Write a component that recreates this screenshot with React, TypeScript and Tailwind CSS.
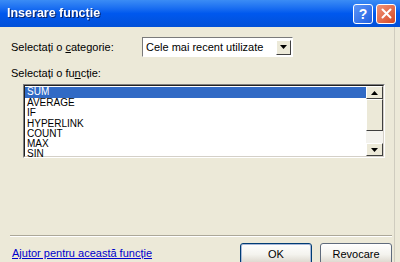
import React from 'react';

const functions = ['SUM', 'AVERAGE', 'IF', 'HYPERLINK', 'COUNT', 'MAX', 'SIN'];

const Arrow = ({ down }: { down?: boolean }) => (
  <svg width="7" height="4" viewBox="0 0 7 4">
    {down ? <polygon points="0,0 7,0 3.5,4" fill="#000" /> : <polygon points="0,4 7,4 3.5,0" fill="#000" />}
  </svg>
);

const XpButton = ({ label, isDefault }: { label: string; isDefault?: boolean }) => (
  <button
    className={`h-[23px] w-[72px] rounded-[3px] border bg-gradient-to-b from-[#ffffff] via-[#f4f3ee] to-[#d6d0c5] text-[11px] text-black ${
      isDefault ? 'border-[#003c74] shadow-[inset_0_0_0_1px_#a8b8d8]' : 'border-[#5f6b7c]'
    }`}
  >
    {label}
  </button>
);

export default function App() {
  return (
    <div className="w-[400px] h-[262px] overflow-hidden bg-[#ece9d8] flex flex-col font-['Liberation_Sans',sans-serif] text-[11px] text-black">
      {/* title bar */}
      <div className="h-[27px] shrink-0 flex items-center justify-between pl-[7px] pr-[4px] bg-gradient-to-b from-[#3b8cf5] via-[#0058ee] to-[#0150d8]">
        <span className="text-white font-bold text-[12.5px] drop-shadow-[1px_1px_0_#0a246a]">Inserare funcție</span>
        <div className="flex gap-[3px]">
          <div className="w-[20px] h-[20px] rounded-[3px] border border-white bg-gradient-to-br from-[#5d95f7] to-[#1f5fe0] flex items-center justify-center text-white font-bold text-[14px] leading-none">
            ?
          </div>
          <div className="w-[20px] h-[20px] rounded-[3px] border border-white bg-gradient-to-br from-[#f09378] to-[#d5461f] flex items-center justify-center">
            <svg width="11" height="11" viewBox="0 0 11 11">
              <path d="M1.5 1.5 L9.5 9.5 M9.5 1.5 L1.5 9.5" stroke="#fff" strokeWidth="2" strokeLinecap="round" />
            </svg>
          </div>
        </div>
      </div>

      {/* body */}
      <div className="flex-1 flex flex-col pl-[11px] pr-[2px] border-r border-[#cfccbf] mr-[5px]">
        <div className="mt-[10px] h-[20px] flex items-center">
          <span className="w-[131px]">
            Selectați o <span className="underline">c</span>ategorie:
          </span>
          <div className="w-[151px] h-[20px] bg-white border-t border-l border-[#7a7a7a] border-b border-r border-b-white border-r-white flex items-center justify-between pl-[3px] pr-[1px]">
            <span>Cele mai recent utilizate</span>
            <div className="w-[15px] h-[15px] bg-[#ece9d8] border border-t-white border-l-white border-b-[#404040] border-r-[#404040] flex items-center justify-center">
              <Arrow down />
            </div>
          </div>
        </div>

        <div className="mt-[9px] h-[14px] flex items-center">
          Selectați o fu<span className="underline">n</span>cție:
        </div>

        <div className="mt-[4px] ml-[12px] w-[362px] h-[74px] border-t border-l border-[#808080] border-b border-r border-b-white border-r-white">
          <div className="h-full flex border-t border-l border-[#202020] border-b border-r border-b-[#d4d0c8] border-r-[#d4d0c8] bg-white">
            <div className="flex-1 pt-[1px] text-[10px] leading-[10.25px]">
              {functions.map((f, i) => (
                <div key={f} className={`pl-[2px] h-[10.25px] ${i === 0 ? 'bg-[#316ac5] text-white h-[11px]' : ''}`}>
                  {f}
                </div>
              ))}
            </div>
            <div className="w-[17px] flex flex-col bg-[#f4f3ee]">
              <div className="h-[13px] bg-[#ece9d8] border border-t-white border-l-white border-b-[#404040] border-r-[#404040] flex items-center justify-center">
                <Arrow />
              </div>
              <div className="h-[32px] bg-[#ece9d8] border border-t-white border-l-white border-b-[#404040] border-r-[#404040]" />
              <div className="flex-1" />
              <div className="h-[13px] bg-[#ece9d8] border border-t-white border-l-white border-b-[#404040] border-r-[#404040] flex items-center justify-center">
                <Arrow down />
              </div>
            </div>
          </div>
        </div>

        <div className="mt-[77px] -ml-[1px] border-t border-[#aca899] border-b border-b-white" />

        <div className="mt-[6px] flex items-start justify-between">
          <a className="mt-[2px] ml-[1px] text-[#0000cc] underline">Ajutor pentru această funcție</a>
          <div className="flex gap-[8px]">
            <XpButton label="OK" isDefault />
            <XpButton label="Revocare" />
          </div>
        </div>
      </div>
    </div>
  );
}
